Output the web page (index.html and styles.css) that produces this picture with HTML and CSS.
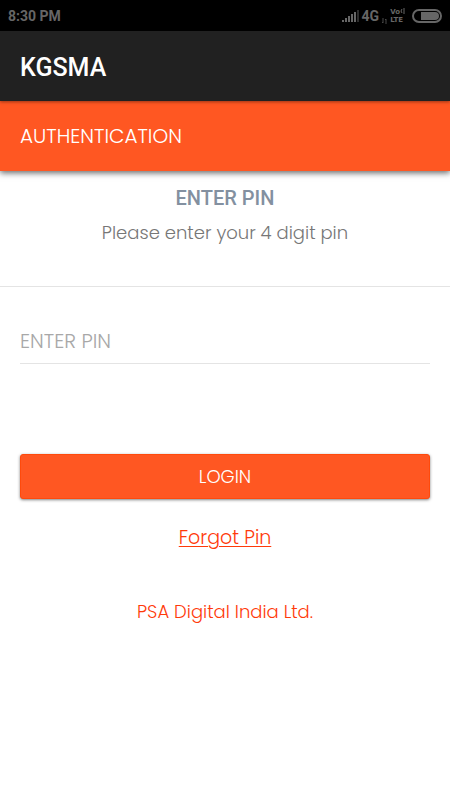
FILE: index.html
```html
<!DOCTYPE html>
<html lang="en">
<head>
<meta charset="utf-8">
<meta name="viewport" content="width=device-width, initial-scale=1">
<title>KGSMA</title>
<link rel="stylesheet" href="styles.css">
</head>
<body>
<div class="status-bar">
  <span class="clock">8:30 PM</span>
  <div class="status-icons">
    <svg class="signal" width="17" height="12" viewBox="0 0 17 12" aria-hidden="true">
      <path class="lit" d="M0 10h2v2H0zM3 8h2v4H3zM6 6h2v6H6zM9 4h2v8H9zM12 2h2v10h-2z"/>
      <path class="dim" d="M15 0h2v12h-2z"/>
    </svg>
    <span class="network">4G</span>
    <svg class="data" width="5" height="6" viewBox="0 0 5 6" aria-hidden="true">
      <path d="M1 0v5M0 4l1 1M4 6V1M3 2l1-1"/>
    </svg>
    <span class="volte"><span>Vo<svg width="5" height="6" viewBox="0 0 5 6" aria-hidden="true"><path d="M2 1Q0 3 2 5M4 0v6"/></svg></span><span>LTE</span></span>
    <svg class="battery" width="30" height="14" viewBox="0 0 30 14" aria-hidden="true">
      <rect class="shell" x="1" y="1" width="28" height="12" rx="6"/>
      <path class="charge" d="M9 3h14a4 4 0 0 1 0 8H9z"/>
    </svg>
  </div>
</div>
<header class="app-bar"><h1>KGSMA</h1></header>
<div class="page-bar"><h2>AUTHENTICATION</h2></div>
<main>
  <section class="intro">
    <h3>ENTER PIN</h3>
    <p>Please enter your 4 digit pin</p>
  </section>
  <form class="pin-form">
    <input type="password" inputmode="numeric" maxlength="4" placeholder="ENTER PIN" aria-label="Enter pin">
    <button type="submit">LOGIN</button>
    <a class="forgot" href="#">Forgot Pin</a>
  </form>
</main>
<footer>PSA Digital India Ltd.</footer>
</body>
</html>
```

FILE: styles.css
```css
* {
  box-sizing: border-box;
}

body {
  margin: 0;
  background: #fff;
  color: #777;
  font: 300 18px/28px Poppins, Inter, sans-serif;
}

h1, h2, h3, p {
  margin: 0;
}

.status-bar {
  display: flex;
  align-items: center;
  justify-content: space-between;
  height: 31px;
  padding: 0 8px;
  background: #000;
  color: #666;
  font: 700 14px/20px Roboto, sans-serif;
}

.status-icons {
  display: flex;
  align-items: center;
  gap: 3px;
}

.signal .lit {
  fill: #666;
}

.signal .dim {
  fill: #2c2c2c;
}

.data {
  align-self: flex-end;
  margin-bottom: 2px;
  fill: none;
  stroke: #484848;
}

.volte {
  display: flex;
  flex-direction: column;
  margin-right: 4px;
  font: 700 7px/8px "DejaVu Sans", sans-serif;
}

.volte svg {
  fill: none;
  stroke: #666;
}

.battery .shell {
  fill: none;
  stroke: #666;
  stroke-width: 2;
}

.battery .charge {
  fill: #666;
}

.app-bar {
  position: relative;
  z-index: 2;
  padding: 23px 20px 19px;
  background: #212121;
  box-shadow: 0 1px 3px rgba(0, 0, 0, 0.4);
  color: #fff;
}

.app-bar h1 {
  font: 500 25px/28px Roboto, sans-serif;
}

.page-bar {
  position: relative;
  z-index: 1;
  padding: 21px 20px;
  background: #ff5722;
  box-shadow: 0 2px 6px rgba(0, 0, 0, 0.6);
  color: #fff;
}

.page-bar h2 {
  font-size: 20px;
  font-weight: 300;
}

.intro {
  padding: 13px 20px 39px;
  border-bottom: 1px solid #e4e4e4;
  text-align: center;
}

.intro h3 {
  margin-bottom: 7px;
  color: #8390a0;
  font: 500 20px/28px Roboto, sans-serif;
}

.pin-form {
  display: flex;
  flex-direction: column;
  padding: 32px 20px 0;
}

input {
  width: 100%;
  height: 45px;
  margin-bottom: 90px;
  padding: 0;
  border: 0;
  border-bottom: 1px solid #e4e4e4;
  border-radius: 0;
  outline: 0;
  background: none;
  color: #555;
  font: inherit;
  font-size: 20px;
}

input::placeholder {
  color: #a8a8a8;
}

button {
  height: 45px;
  border: 1px solid #ff4a0c;
  border-radius: 3px;
  background: #ff5722;
  box-shadow: 0 1px 3px rgba(0, 0, 0, 0.5);
  color: #fff;
  font: inherit;
}

.forgot {
  align-self: center;
  margin-top: 25px;
  color: #ff3a0a;
  font-size: 19px;
  text-decoration-thickness: 1px;
  text-underline-offset: 2px;
}

footer {
  padding: 46px 20px;
  color: #ff3a0a;
  text-align: center;
}
```
